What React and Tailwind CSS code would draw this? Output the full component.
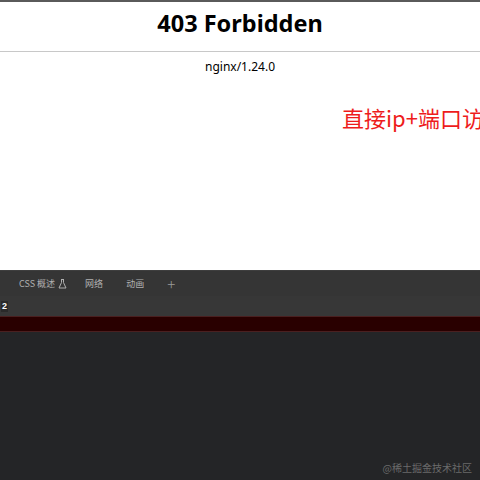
export default function App() {
  return (
    <div className="w-[480px] h-[480px] overflow-hidden flex flex-col bg-white" style={{ fontFamily: '"Noto Sans", "Open Sans", "Noto Sans CJK SC", sans-serif' }}>
      <div className="h-[2px] bg-[#5a5a5a]" />
      <div className="h-[268px] flex flex-col relative overflow-hidden">
        <h1 className="text-center text-[23.5px] font-bold text-black leading-[30px] mt-[6px]">403 Forbidden</h1>
        <hr className="mt-[13px] border-t border-[#c8c8c8]" />
        <p className="text-center text-[12px] text-black mt-[6px] leading-[18px]">nginx/1.24.0</p>
        <div className="absolute left-[342px] top-[99px] whitespace-nowrap text-[22px] text-[#ee1c1c]" style={{ fontFamily: '"Noto Sans CJK SC", sans-serif' }}>
          直接ip+端口访问
        </div>
      </div>
      <div className="flex-1 flex flex-col bg-[#242527] text-[#b0b0b0]" style={{ fontFamily: '"Noto Sans CJK SC", sans-serif' }}>
        <div className="h-[26px] bg-[#353535] border-t border-[#3e3e3e] flex items-center text-[9px] pl-[19px]">
          <span className="flex items-center gap-[3px]">
            CSS 概述
            <svg width="9" height="10" viewBox="0 0 9 10" fill="none" stroke="#b0b0b0" strokeWidth="1">
              <path d="M3 0.5h3M3.5 0.5v3L1 9h7L5.5 3.5v-3" />
            </svg>
          </span>
          <span className="ml-[18px]">网络</span>
          <span className="ml-[23px]">动画</span>
          <span className="ml-[23px] text-[15px] font-light leading-none text-[#9a9a9a]">+</span>
        </div>
        <div className="h-[20px] bg-[#373737] flex items-center">
          <span className="ml-[1px] px-[1px] bg-[#2a2a2a] text-white text-[9px] font-bold leading-[11px]" style={{ fontFamily: '"Liberation Sans", sans-serif' }}>2</span>
        </div>
        <div className="h-[16px] bg-[#290000] border-t border-b border-[#4a2020]" />
        <div className="flex-1 relative">
          <span className="absolute right-[8px] bottom-[5px] text-[10px] text-[#6a6a6a]">@稀土掘金技术社区</span>
        </div>
      </div>
    </div>
  );
}
